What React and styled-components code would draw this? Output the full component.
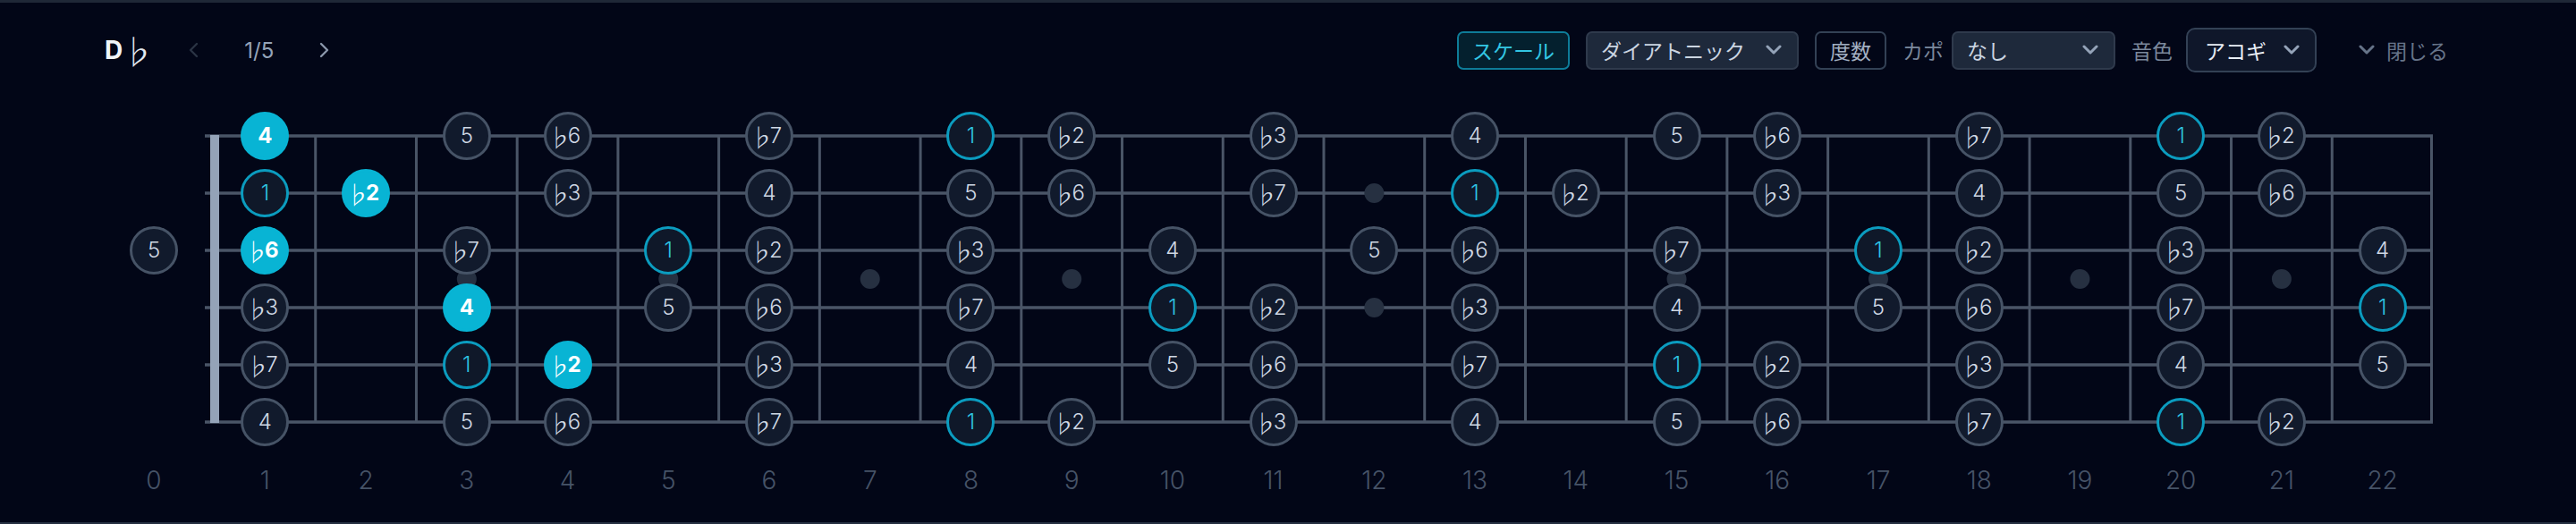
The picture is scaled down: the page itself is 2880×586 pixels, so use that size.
import React from "react";
import styled, { createGlobalStyle } from "styled-components";

const GlobalStyle = createGlobalStyle`
  html, body {
    margin: 0;
    padding: 0;
    background: #020617;
  }
  body {
    font-family: Inter, "Noto Sans CJK JP", sans-serif;
  }
`;

// tuning, high E to low E, in semitones above C
const TUNING = [4, 11, 7, 2, 9, 4];
const DEGREES = { 0: "1", 1: "♭2", 3: "♭3", 5: "4", 7: "5", 8: "♭6", 10: "♭7" };
const FRETS = 22;
const ACTIVE = ["0-1", "1-2", "2-1", "3-3", "4-4"];
const INLAYS = [3, 5, 7, 9, 15, 17, 19, 21];

const BOARD_W = 2616;
const OPEN_W = 136;
const FRET_W = (BOARD_W - OPEN_W) / FRETS;
const ROW_H = 64;

export default function App() {
  const notes = [];
  TUNING.forEach((base, s) => {
    for (let f = 0; f <= FRETS; f++) {
      const label = DEGREES[(base + f) % 12];
      if (!label) continue;
      const variant = ACTIVE.includes(`${s}-${f}`) ? "active" : label === "1" ? "root" : "plain";
      notes.push({ s, f, label, variant });
    }
  });

  return (
    <Page>
      <GlobalStyle />
      <Header>
        <TitleGroup>
          <KeyName>
            D<KeyFlat>♭</KeyFlat>
          </KeyName>
          <Pager $dim>
            <svg width="12" height="18" viewBox="0 0 12 18">
              <polyline points="10,2 3,9 10,16" fill="none" stroke="currentColor" strokeWidth="2.4" strokeLinecap="round" strokeLinejoin="round" />
            </svg>
          </Pager>
          <PageCount>1/5</PageCount>
          <Pager>
            <svg width="12" height="18" viewBox="0 0 12 18">
              <polyline points="2,2 9,9 2,16" fill="none" stroke="currentColor" strokeWidth="2.4" strokeLinecap="round" strokeLinejoin="round" />
            </svg>
          </Pager>
        </TitleGroup>

        <Toolbar>
          <ToggleButton $active>スケール</ToggleButton>
          <Select $width={238}>
            ダイアトニック
            <Chevron />
          </Select>
          <ToggleButton>度数</ToggleButton>
          <Field>
            <FieldLabel>カポ</FieldLabel>
            <Select $width={183}>
              なし
              <Chevron />
            </Select>
          </Field>
          <Field $gap={15}>
            <FieldLabel>音色</FieldLabel>
            <Select $width={146} $tall>
              アコギ
              <Chevron />
            </Select>
          </Field>
          <CloseButton>
            <Chevron />
            閉じる
          </CloseButton>
        </Toolbar>
      </Header>

      <Board>
        <BoardLines viewBox={`0 0 ${BOARD_W} ${ROW_H * 6}`}>
          {TUNING.map((_, s) => (
            <line key={s} x1="125" x2={BOARD_W} y1={32 + s * ROW_H} y2={32 + s * ROW_H} stroke="#4a5567" strokeWidth="3.5" />
          ))}
          {Array.from({ length: FRETS }, (_, i) => {
            const x = Math.min(OPEN_W + (i + 1) * FRET_W, BOARD_W - 1.5);
            return <line key={i} x1={x} x2={x} y1="32" y2="352" stroke="#4a5567" strokeWidth="3" />;
          })}
          <rect x="131" y="31" width="10" height="322" fill="#94a3b8" />
          {INLAYS.map((f) => (
            <circle key={f} cx={OPEN_W + (f - 0.5) * FRET_W} cy="192" r="11" fill="#263041" />
          ))}
          <circle cx={OPEN_W + 11.5 * FRET_W} cy="96" r="11" fill="#263041" />
          <circle cx={OPEN_W + 11.5 * FRET_W} cy="224" r="11" fill="#263041" />
        </BoardLines>

        {notes.map((n) => (
          <Note key={`${n.s}-${n.f}`} $row={n.s + 1} $col={n.f + 1} $variant={n.variant}>
            {n.label.startsWith("♭") ? (
              <>
                <NoteFlat>♭</NoteFlat>
                <span>{n.label.slice(1)}</span>
              </>
            ) : (
              n.label
            )}
          </Note>
        ))}
      </Board>

      <FretNumbers>
        {Array.from({ length: FRETS + 1 }, (_, f) => (
          <FretNumber key={f}>{f}</FretNumber>
        ))}
      </FretNumbers>
    </Page>
  );
}

function Chevron() {
  return (
    <ChevronIcon width="20" height="12" viewBox="0 0 20 12">
      <polyline points="3,2 10,9 17,2" fill="none" stroke="currentColor" strokeWidth="3" strokeLinecap="round" strokeLinejoin="round" />
    </ChevronIcon>
  );
}

const Page = styled.div`
  width: 2880px;
  height: 586px;
  box-sizing: border-box;
  border-top: 3px solid #1f2837;
  border-bottom: 2px solid #263041;
  background: #020617;
  overflow: hidden;
`;

const Header = styled.header`
  height: 106px;
  display: flex;
  align-items: center;
  justify-content: space-between;
  padding: 0 143px 0 117px;
`;

const TitleGroup = styled.div`
  display: flex;
  align-items: center;
`;

const KeyName = styled.div`
  display: flex;
  align-items: center;
  font-size: 28px;
  font-weight: 700;
  color: #f1f5f9;
`;

const KeyFlat = styled.span`
  margin-left: -2px;
  font-family: "Noto Sans CJK JP", sans-serif;
  font-weight: 300;
  font-size: 38px;
  line-height: 1;
  color: #e2e8f0;
`;

const Pager = styled.span`
  display: flex;
  align-items: center;
  margin-left: ${(p) => (p.$dim ? "37px" : "51px")};
  margin-right: ${(p) => (p.$dim ? "51px" : "0")};
  color: ${(p) => (p.$dim ? "#2a3444" : "#8a97ab")};
`;

const PageCount = styled.span`
  font-size: 24px;
  font-weight: 400;
  color: #94a3b8;
`;

const Toolbar = styled.div`
  display: flex;
  align-items: center;
  gap: 18px;
  font-family: "Noto Sans CJK JP", sans-serif;
  font-size: 23px;
`;

const ToggleButton = styled.div`
  height: 43px;
  box-sizing: border-box;
  display: flex;
  align-items: center;
  padding: 0 15px;
  border-radius: 7px;
  border: 2px solid ${(p) => (p.$active ? "#0e7c98" : "#334155")};
  background: ${(p) => (p.$active ? "#04202e" : "transparent")};
  color: ${(p) => (p.$active ? "#33c6e3" : "#a3b0c2")};
`;

const Select = styled.div`
  width: ${(p) => p.$width}px;
  height: ${(p) => (p.$tall ? 50 : 43)}px;
  box-sizing: border-box;
  display: flex;
  align-items: center;
  justify-content: space-between;
  padding: ${(p) => (p.$tall ? "0 16px 0 19px" : "0 16px 0 15px")};
  border-radius: ${(p) => (p.$tall ? 10 : 7)}px;
  border: 2px solid ${(p) => (p.$tall ? "#334155" : "#2f3a4c")};
  background: ${(p) => (p.$tall ? "#0f172a" : "#1e293b")};
  color: ${(p) => (p.$tall ? "#e8edf4" : "#cbd5e1")};
`;

const Field = styled.div`
  display: flex;
  align-items: center;
  gap: ${(p) => p.$gap || 9}px;
`;

const FieldLabel = styled.span`
  color: #7b889c;
`;

const CloseButton = styled.div`
  display: flex;
  align-items: center;
  gap: 12px;
  margin-left: 28px;
  color: #667489;
`;

const ChevronIcon = styled.svg`
  display: block;
  color: #94a3b8;
  ${CloseButton} & {
    color: #667489;
  }
`;

const Board = styled.div`
  width: ${BOARD_W}px;
  margin: 11px 0 0 104px;
  display: grid;
  grid-template-columns: ${OPEN_W}px repeat(${FRETS}, 1fr);
  grid-template-rows: repeat(6, ${ROW_H}px);
`;

const BoardLines = styled.svg`
  grid-row: 1 / -1;
  grid-column: 1 / -1;
  width: 100%;
  height: 100%;
  display: block;
`;

const NOTE_STYLES = {
  active: { border: "#08b4d4", bg: "#08b4d4", color: "#ffffff", weight: 700 },
  root: { border: "#0b9cbf", bg: "#0f1829", color: "#2ec4e2", weight: 300 },
  plain: { border: "#465366", bg: "#111a2c", color: "#cfd8e4", weight: 300 },
};

const Note = styled.div`
  grid-row: ${(p) => p.$row};
  grid-column: ${(p) => p.$col};
  place-self: center;
  width: 54px;
  height: 54px;
  box-sizing: border-box;
  border-radius: 50%;
  border: 3px solid ${(p) => NOTE_STYLES[p.$variant].border};
  background: ${(p) => NOTE_STYLES[p.$variant].bg};
  color: ${(p) => NOTE_STYLES[p.$variant].color};
  font-weight: ${(p) => NOTE_STYLES[p.$variant].weight};
  display: flex;
  align-items: center;
  justify-content: center;
  gap: 3px;
  font-size: 24px;
  line-height: 1;
`;

// flat sign: narrow box with the wide CJK glyph centred in it
const NoteFlat = styled.span`
  display: flex;
  justify-content: center;
  width: 12px;
  font-family: "Noto Sans CJK JP", sans-serif;
  font-weight: 300;
  font-size: 28px;
  line-height: 1;
  transform: translateY(1px);
`;

const FretNumbers = styled.div`
  width: ${BOARD_W}px;
  margin: 8px 0 0 104px;
  height: 50px;
  display: grid;
  grid-template-columns: ${OPEN_W}px repeat(${FRETS}, 1fr);
  align-items: center;
  justify-items: center;
`;

const FretNumber = styled.span`
  font-size: 28px;
  font-weight: 300;
  color: #465367;
`;
